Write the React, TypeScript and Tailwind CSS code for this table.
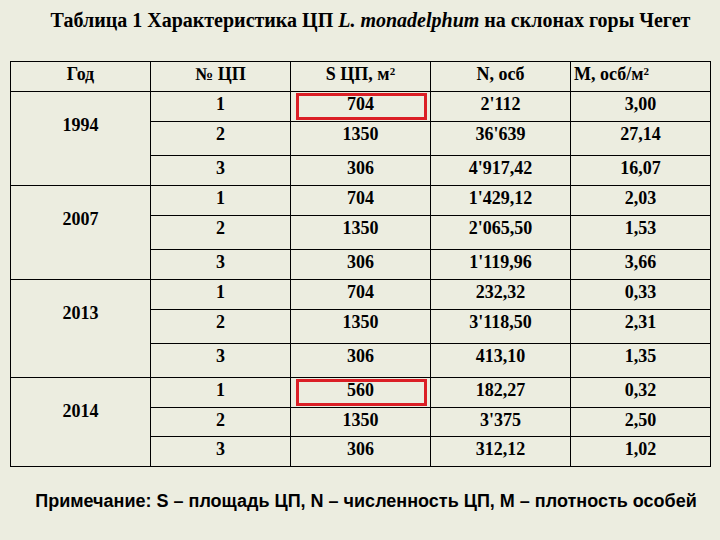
import React from "react";

type Row = { n: string; s: string; N: string; m: string; h: number; red?: boolean };
type Group = { year: string; rows: Row[] };

const groups: Group[] = [
  {
    year: "1994",
    rows: [
      { n: "1", s: "704", N: "2'112", m: "3,00", h: 30, red: true },
      { n: "2", s: "1350", N: "36'639", m: "27,14", h: 34 },
      { n: "3", s: "306", N: "4'917,42", m: "16,07", h: 30 },
    ],
  },
  {
    year: "2007",
    rows: [
      { n: "1", s: "704", N: "1'429,12", m: "2,03", h: 30 },
      { n: "2", s: "1350", N: "2'065,50", m: "1,53", h: 34 },
      { n: "3", s: "306", N: "1'119,96", m: "3,66", h: 30 },
    ],
  },
  {
    year: "2013",
    rows: [
      { n: "1", s: "704", N: "232,32", m: "0,33", h: 30 },
      { n: "2", s: "1350", N: "3'118,50", m: "2,31", h: 34 },
      { n: "3", s: "306", N: "413,10", m: "1,35", h: 34 },
    ],
  },
  {
    year: "2014",
    rows: [
      { n: "1", s: "560", N: "182,27", m: "0,32", h: 30, red: true },
      { n: "2", s: "1350", N: "3'375", m: "2,50", h: 29 },
      { n: "3", s: "306", N: "312,12", m: "1,02", h: 30 },
    ],
  },
];

const cell = "border border-black align-top text-center pt-[2px] p-0";

export default function App() {
  return (
    <div
      className="w-[720px] h-[540px] bg-[#ecede0] text-black overflow-hidden"
      style={{ fontFamily: '"Liberation Serif", "Times New Roman", serif' }}
    >
      <h1 className="pl-[21px] pt-[8px] h-[61px] text-center text-[20px] leading-[24px] font-bold">
        Таблица 1 Характеристика ЦП <i>L. monadelphum</i> на склонах горы Чегет
      </h1>
      <table className="ml-[10px] w-[700px] table-fixed border-collapse text-[18px] leading-[20px] font-bold">
        <colgroup>
          <col className="w-[140px]" />
          <col className="w-[140px]" />
          <col className="w-[140px]" />
          <col className="w-[140px]" />
          <col className="w-[140px]" />
        </colgroup>
        <thead>
          <tr className="h-[30px]">
            <th className={cell}>Год</th>
            <th className={cell}>№ ЦП</th>
            <th className={cell}>
              S ЦП, м<sup className="text-[11px]">2</sup>
            </th>
            <th className={cell}>N, осб</th>
            <th className={"border border-black align-top text-left pl-[3px] pt-[2px]"}>
              M, осб/м<sup className="text-[11px]">2</sup>
            </th>
          </tr>
        </thead>
        <tbody>
          {groups.map((g) =>
            g.rows.map((r, i) => (
              <tr key={g.year + r.n} style={{ height: r.h }}>
                {i === 0 && (
                  <td rowSpan={3} className="border border-black align-top text-center pt-[23px]">
                    {g.year}
                  </td>
                )}
                <td className={cell}>{r.n}</td>
                <td className={cell + " relative"}>
                  {r.s}
                  {r.red && (
                    <span className="absolute left-[5px] right-[3px] top-[1px] bottom-[1px] border-[3px] border-[#db1f26]" />
                  )}
                </td>
                <td className={cell}>{r.N}</td>
                <td className={cell}>{r.m}</td>
              </tr>
            ))
          )}
        </tbody>
      </table>
      <p
        className="pl-[12px] pt-[24px] text-center text-[18px] leading-[20px] font-bold"
        style={{ fontFamily: '"Liberation Sans", Arial, sans-serif' }}
      >
        Примечание: S – площадь ЦП, N – численность ЦП, M – плотность особей
      </p>
    </div>
  );
}
